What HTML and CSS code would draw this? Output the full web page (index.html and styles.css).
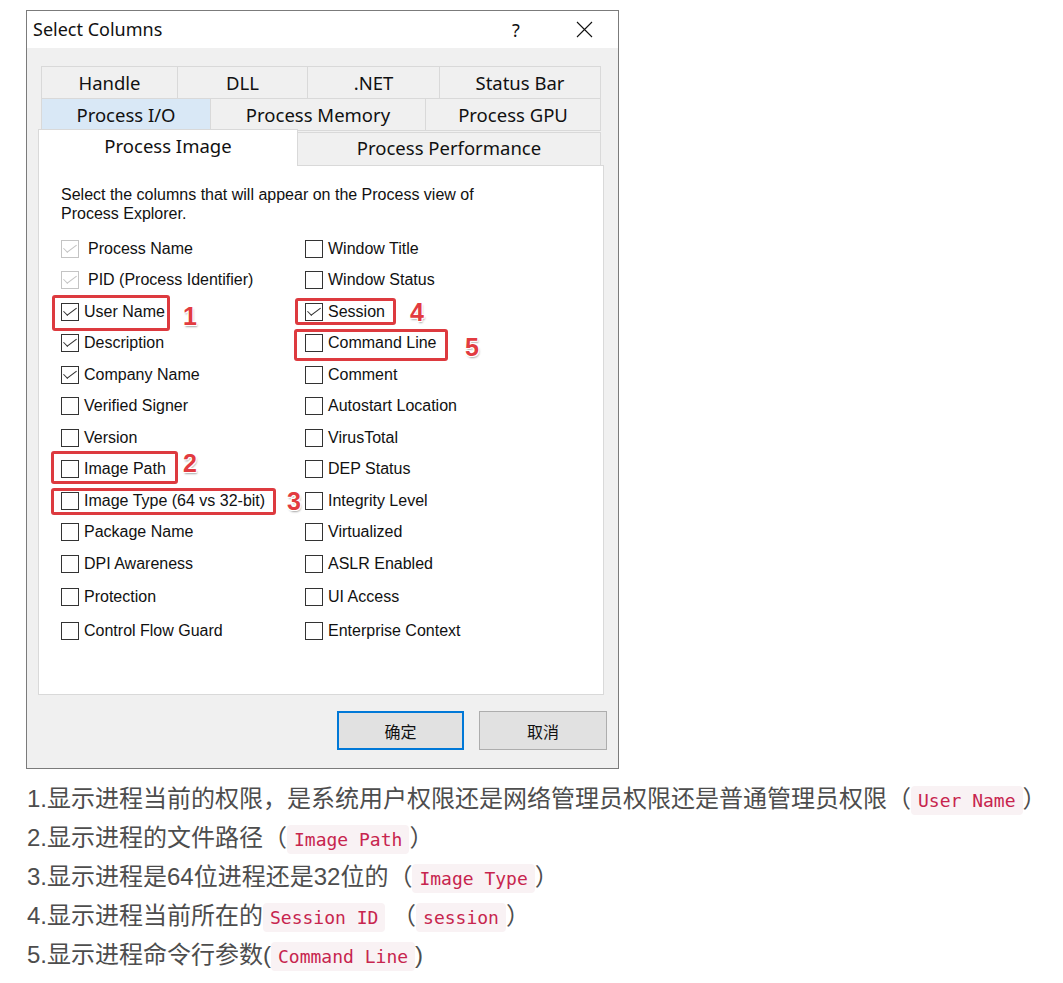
FILE: index.html
```html
<!DOCTYPE html>
<html lang="zh-CN">
<head>
    <meta charset="UTF-8">
    <title>Select Columns</title>
    <link rel="stylesheet" href="styles.css">
</head>
<body>
    <div class="dialog">
        <div class="titlebar">
            <span class="title">Select Columns</span>
            <span class="title-btn">?</span>
            <span class="title-btn">
                <svg width="17" height="17" viewBox="0 0 17 17"><path d="M1 1 L16 16 M16 1 L1 16" stroke="#111" stroke-width="1.1" fill="none"/></svg>
            </span>
        </div>

        <div class="dialog-body">
            <div class="tabs">
                <div class="tab-row">
                    <div class="tab" style="width:137px">Handle</div>
                    <div class="tab" style="width:131px">DLL</div>
                    <div class="tab" style="width:133px">.NET</div>
                    <div class="tab tab-fill">Status Bar</div>
                </div>
                <div class="tab-row">
                    <div class="tab tab-hover" style="width:170px">Process I/O</div>
                    <div class="tab" style="width:216px">Process Memory</div>
                    <div class="tab tab-fill">Process GPU</div>
                </div>
                <div class="tab-row tab-row-last">
                    <div class="tab tab-active">Process Image</div>
                    <div class="tab tab-fill">Process Performance</div>
                </div>
            </div>

            <div class="panel">
                <p class="intro">Select the columns that will appear on the Process view of<br>Process Explorer.</p>
                <div class="columns">
                    <ul class="col">
                        <li class="item disabled"><span class="box checked"></span>Process Name</li>
                        <li class="item disabled"><span class="box checked"></span>PID (Process Identifier)</li>
                        <li class="item">
                            <span class="box checked"></span>User Name
                            <span class="mark mark-1"></span><span class="num num-1">1</span>
                        </li>
                        <li class="item"><span class="box checked"></span>Description</li>
                        <li class="item"><span class="box checked"></span>Company Name</li>
                        <li class="item"><span class="box"></span>Verified Signer</li>
                        <li class="item"><span class="box"></span>Version</li>
                        <li class="item">
                            <span class="box"></span>Image Path
                            <span class="mark mark-2"></span><span class="num num-2">2</span>
                        </li>
                        <li class="item">
                            <span class="box"></span>Image Type (64 vs 32-bit)
                            <span class="mark mark-3"></span><span class="num num-3">3</span>
                        </li>
                        <li class="item"><span class="box"></span>Package Name</li>
                        <li class="item"><span class="box"></span>DPI Awareness</li>
                        <li class="item item-tall"><span class="box"></span>Protection</li>
                        <li class="item item-tall"><span class="box"></span>Control Flow Guard</li>
                    </ul>
                    <ul class="col">
                        <li class="item"><span class="box"></span>Window Title</li>
                        <li class="item"><span class="box"></span>Window Status</li>
                        <li class="item">
                            <span class="box checked"></span>Session
                            <span class="mark mark-4"></span><span class="num num-4">4</span>
                        </li>
                        <li class="item">
                            <span class="box"></span>Command Line
                            <span class="mark mark-5"></span><span class="num num-5">5</span>
                        </li>
                        <li class="item"><span class="box"></span>Comment</li>
                        <li class="item"><span class="box"></span>Autostart Location</li>
                        <li class="item"><span class="box"></span>VirusTotal</li>
                        <li class="item"><span class="box"></span>DEP Status</li>
                        <li class="item"><span class="box"></span>Integrity Level</li>
                        <li class="item"><span class="box"></span>Virtualized</li>
                        <li class="item"><span class="box"></span>ASLR Enabled</li>
                        <li class="item item-tall"><span class="box"></span>UI Access</li>
                        <li class="item item-tall"><span class="box"></span>Enterprise Context</li>
                    </ul>
                </div>
            </div>

            <div class="buttons">
                <button class="btn btn-default">确定</button>
                <button class="btn">取消</button>
            </div>
        </div>
    </div>

    <div class="notes">
        <p>1.显示进程当前的权限，是系统用户权限还是网络管理员权限还是普通管理员权限（<code>User Name</code>）</p>
        <p>2.显示进程的文件路径（<code>Image Path</code>）</p>
        <p>3.显示进程是64位进程还是32位的（<code>Image Type</code>）</p>
        <p>4.显示进程当前所在的<code>Session ID</code> （<code>session</code>）</p>
        <p>5.显示进程命令行参数(<code>Command Line</code>)</p>
    </div>
</body>
</html>
```

FILE: styles.css
```css
* {
    margin: 0;
    padding: 0;
    box-sizing: border-box;
}

body {
    background-color: #fff;
    font-family: 'Liberation Sans', 'Noto Sans CJK SC', sans-serif;
}

.dialog {
    width: 593px;
    height: 759px;
    margin: 10px 0 0 26px;
    border: 1px solid #7b7b7b;
    background-color: #f0f0f0;
}

.titlebar {
    height: 37px;
    background-color: #fff;
    display: flex;
    align-items: center;
}

.title {
    flex: 1;
    padding-left: 6px;
    margin-top: -2px;
    font-family: 'Noto Sans', sans-serif;
    font-size: 18px;
    color: #111;
}

.title-btn {
    width: 68px;
    display: flex;
    justify-content: center;
    font-family: 'Noto Sans', sans-serif;
    font-size: 18px;
    color: #111;
}

.dialog-body {
    padding: 18px 14px 0 11px;
}

/* tabs */
.tab-row {
    display: flex;
    margin: 0 3px;
}

.tab-row + .tab-row {
    margin-top: -1px;
}

.tab {
    height: 33px;
    border: 1px solid #d9d9d9;
    margin-left: -1px;
    display: flex;
    justify-content: center;
    align-items: center;
    font-family: 'Noto Sans', sans-serif;
    font-size: 18.5px;
    color: #111;
    background-color: #f0f0f0;
}

.tab:first-child {
    margin-left: 0;
}

.tab-fill {
    flex: 1;
}

.tab-hover {
    background-color: #d9e8f6;
}

.tab-row.tab-row-last {
    margin: -2px 0 0 0;
    align-items: flex-end;
}

.tab-row-last .tab {
    border-bottom: none;
}

.tab-row-last .tab-fill {
    margin-right: 3px;
    height: 33px;
    padding-bottom: 3px;
}

.tab-active {
    width: 260px;
    height: 37px;
    margin-bottom: -1px;
    position: relative;
    z-index: 1;
    background-color: #fff;
    padding-bottom: 5px;
}

.panel {
    height: 530px;
    background-color: #fff;
    border: 1px solid #d9d9d9;
    padding: 19px 0 0 22px;
    font-size: 16px;
    color: #111;
}

.intro {
    line-height: 19px;
}

.columns {
    display: flex;
    margin-top: 10px;
}

.col {
    list-style: none;
    width: 244px;
}

.item {
    height: 31.5px;
    display: flex;
    align-items: center;
    gap: 5px;
    position: relative;
    white-space: nowrap;
}

.item-tall {
    height: 34px;
}

.item.disabled {
    gap: 9px;
}

.box {
    width: 18px;
    height: 18px;
    border: 1px solid #333;
    background-color: #fff;
    flex-shrink: 0;
    position: relative;
}

.box.checked::after {
    content: '';
    position: absolute;
    left: 5px;
    top: 0px;
    width: 5px;
    height: 11px;
    border-right: 1.4px solid #333;
    border-bottom: 1.4px solid #333;
    transform: rotate(45deg) skewX(-8deg);
    transform-origin: center;
}

.disabled .box {
    border-color: #c4c4c4;
}

.disabled .box.checked::after {
    border-color: #c4c4c4;
}

/* red annotations */
.mark {
    position: absolute;
    border: 3px solid #dd3a3f;
    border-radius: 3px;
}

.mark-1 { left: -9px; top: -1px; width: 118px; height: 36px; }
.mark-2 { left: -10px; top: -3px; width: 127px; height: 33px; }
.mark-3 { left: -10px; top: 3px; width: 225px; height: 27px; }
.mark-4 { left: -10px; top: 2px; width: 101px; height: 27px; }
.mark-5 { left: -11px; top: 1px; width: 154px; height: 32px; }

.num {
    position: absolute;
    font-size: 25px;
    line-height: 22px;
    font-weight: bold;
    color: #e23b40;
    text-shadow: 1px 1px 0 #fff, -1px -1px 0 #fff, 1px -1px 0 #fff, -1px 1px 0 #fff, 1px 2px 2px rgba(0,0,0,0.35);
}

.num-1 { left: 122px; top: 9px; }
.num-2 { left: 122px; top: -2px; }
.num-3 { left: 226px; top: 5px; }
.num-4 { left: 105px; top: 5px; }
.num-5 { left: 160px; top: 8px; }

.buttons {
    display: flex;
    justify-content: flex-end;
    gap: 15px;
    margin: 16px -3px 0 0;
}

.btn {
    width: 128px;
    height: 39px;
    background-color: #e1e1e1;
    border: 1px solid #adadad;
    font-family: 'Noto Sans CJK SC', sans-serif;
    font-size: 16px;
    color: #111;
}

.btn-default {
    width: 127px;
    border: 2px solid #0078d7;
}

/* notes under the picture */
.notes {
    margin: 10px 0 0 27px;
    font-size: 24px;
    color: #4d4d4d;
    white-space: nowrap;
}

.notes p {
    height: 39px;
    line-height: 39px;
}

.notes code {
    font-family: 'DejaVu Sans Mono', monospace;
    font-size: 18px;
    line-height: 1;
    color: #c7254e;
    background-color: #f9f2f4;
    padding: 4px 7px;
    border-radius: 4px;
}
```
